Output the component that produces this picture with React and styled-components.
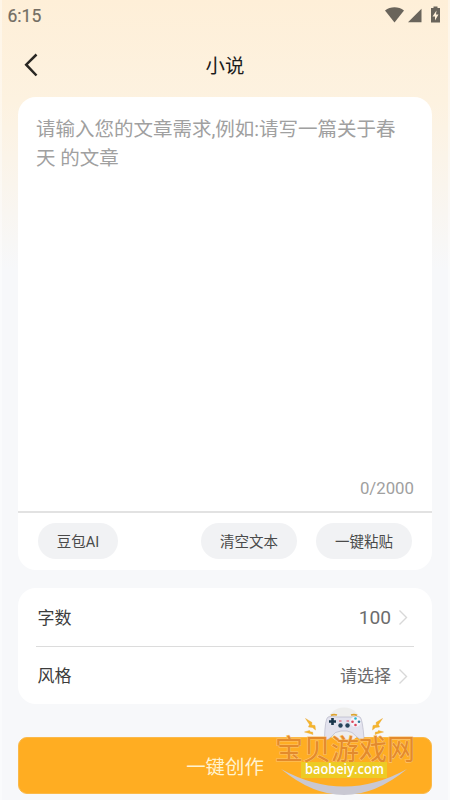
import React from 'react';
import styled, { createGlobalStyle } from 'styled-components';

const GlobalStyle = createGlobalStyle`
  * {
    box-sizing: border-box;
  }

  body {
    margin: 0;
    font-family: Roboto, "Noto Sans CJK SC", sans-serif;
  }

  button {
    border: none;
    padding: 0;
    font-family: inherit;
    cursor: pointer;
  }
`;

const Screen = styled.div`
  position: relative;
  width: 450px;
  height: 800px;
  overflow: hidden;
  display: flex;
  flex-direction: column;
  background: linear-gradient(180deg, #feefd8 0, #fdf2e0 100px, #f7f8fa 270px);
  border-left: 2px solid rgba(255, 255, 255, 0.4);
  border-right: 2px solid rgba(255, 255, 255, 0.4);
  background-origin: border-box;
`;

const StatusBar = styled.div`
  display: flex;
  justify-content: space-between;
  height: 32px;
  padding: 6px 6px 0 5.5px;
  color: #69645b;
`;

const Clock = styled.div`
  font-size: 17.5px;
  line-height: 20px;
  color: #736d63;
  -webkit-text-stroke: 0.2px currentColor;
`;

const StatusIcons = styled.svg`
  width: 58px;
  height: 20px;
`;

const Header = styled.header`
  display: grid;
  grid-template-columns: 48px 1fr 48px;
  align-items: center;
  height: 65px;
`;

const BackButton = styled.button`
  display: flex;
  width: 48px;
  height: 48px;
  padding: 12px 0 0 20px;
  background: none;
`;

const Title = styled.h1`
  margin: 0;
  padding-top: 5px;
  color: #1c1c1c;
  font-size: 19.4px;
  font-weight: 400;
  line-height: 28px;
  text-align: center;
`;

const Card = styled.section`
  margin: 0 16px 18px;
  background: #fff;
  border-radius: 18px;
`;

const Editor = styled.div`
  display: flex;
  flex-direction: column;
  justify-content: space-between;
  height: 416px;
  padding: 19px 18px 12px;
  border-bottom: 2px solid #e2e2e2;
`;

const Placeholder = styled.div`
  width: 368px;
  color: #a0a0a0;
  font-size: 19.5px;
  line-height: 28.5px;
`;

const Counter = styled.div`
  color: #a0a0a0;
  font-size: 16.8px;
  line-height: 22px;
  text-align: right;
`;

const Tools = styled.div`
  display: flex;
  gap: 19px;
  height: 57px;
  padding: 10px 20px 0;
`;

const ToolButton = styled.button`
  width: ${({ $width }) => $width}px;
  height: 36px;
  margin-right: ${({ $push }) => ($push ? 'auto' : '0')};
  padding-top: 3px;
  border-radius: 18px;
  background: #f1f2f4;
  color: #4a4a4a;
  font-size: 14.5px;
  line-height: 33px;
`;

const Option = styled.div`
  display: flex;
  align-items: center;
  height: ${({ $last }) => ($last ? 57 : 59)}px;
  margin: 0 18px;
  padding: 0 5px 0 1.5px;
  border-bottom: ${({ $last }) => ($last ? 'none' : '1px solid #dcdcdc')};
`;

const OptionLabel = styled.span`
  flex: 1;
  padding-bottom: 2px;
  color: #3c3c3c;
  font-size: 17px;
`;

const OptionValue = styled.span`
  margin-right: 8px;
  padding-bottom: ${({ $lift }) => $lift || 0}px;
  color: #6c6c6c;
  font-size: ${({ $size }) => $size}px;
`;

const CreateButton = styled.button`
  height: 57px;
  margin: 15px 16px 0;
  padding-top: 4px;
  border: 1px solid #fbb949;
  border-radius: 9px;
  background: #ffad22;
  color: #fff3cf;
  font-size: 19.4px;
  line-height: 51px;
`;

// Site mark floats over the button.
const SiteMark = styled.svg`
  position: absolute;
  left: 268px;
  top: 702px;
  width: 150px;
  height: 96px;
  pointer-events: none;
`;

const OptionArrow = () => (
  <svg width="10" height="16" viewBox="0 0 10 16" fill="none">
    <path d="M.5 1.500 7.500 8.500 .5 15.500" stroke="#d8d8d8" strokeWidth="1.400" />
  </svg>
);

const App = () => {
  return (
    <>
      <GlobalStyle />
      <Screen>
        <StatusBar>
          <Clock>6:15</Clock>
          <StatusIcons viewBox="0 0 58 20" fill="currentColor">
            <path d="M1 4.5C6.5.2 14.5.2 20 4.5L10.5 16.5Z" />
            <path d="M24 16.2 37.5 2.7V16.2Z" />
            <path d="M49.5 .5h4v1.5H56v14.5h-9v-14.5h2.5Z" />
            <path d="m52.5 4.5-4 6H51v4l3.5-6H52Z" fill="#feefd9" />
          </StatusIcons>
        </StatusBar>

        <Header>
          <BackButton aria-label="返回">
            <svg width="18" height="24" viewBox="0 0 18 24" fill="none">
              <path d="M14.5 1.5 4.2 11.7 14.5 22.5" stroke="#292723" strokeWidth="2.5" />
            </svg>
          </BackButton>
          <Title>小说</Title>
        </Header>

        <Card>
          <Editor>
            <Placeholder>
              请输入您的文章需求,例如:请写一篇关于春天 的文章
            </Placeholder>
            <Counter>0/2000</Counter>
          </Editor>
          <Tools>
            <ToolButton $width={80} $push>豆包AI</ToolButton>
            <ToolButton $width={96}>清空文本</ToolButton>
            <ToolButton $width={96}>一键粘贴</ToolButton>
          </Tools>
        </Card>

        <Card>
          <Option>
            <OptionLabel>字数</OptionLabel>
            <OptionValue $size={19.2}>100</OptionValue>
            <OptionArrow />
          </Option>
          <Option $last>
            <OptionLabel>风格</OptionLabel>
            <OptionValue $size={17} $lift={2}>请选择</OptionValue>
            <OptionArrow />
          </Option>
        </Card>

        <CreateButton>一键创作</CreateButton>

        <SiteMark viewBox="270 702 150 96">
          <circle cx="344" cy="725" r="17.5" fill="#eeeeed" />
          <path d="M281 769Q344 821 407 769Q344 804 281 769Z" fill="#c9c8d2" />
          <g fill="#f6b62c" stroke="#e6a12c" strokeWidth=".4">
            <path d="m305.500 718.500 6.500 4-.5 2.500 3.500.5.500 4.500-3-2.500-4-.5 1-2.500Z" />
            <path d="m304.500 732 5-1.500 1 1.500 2 0 .5 2.500-3-1Z" />
            <path d="m382.500 718.500-6.500 4 .5 2.500-3.500.5-.5 4.500 3-2.500 4-.5-1-2.500Z" />
            <path d="m383.500 732-5-1.500-1 1.500-2 0-.5 2.500 3-1Z" />
          </g>
          <path d="M331 715.5q2-1.500 6-.5M351 715q4-1 6 .5" stroke="#dda32e" strokeWidth="1.8" fill="none" />
          <path d="M328 717Q332 715.5 337 717H351Q357 715.5 360 717Q362.5 719 364 738Q362 742 357 737Q352 731 347 731H341Q335 731 331 737Q326 742 324.5 738Q325 719 328 717Z" fill="#e3e3ee" stroke="#b0b0c2" strokeWidth=".6" />
          <path d="M332.5 718v7M329 721.5h7" stroke="#18354a" strokeWidth="2.6" />
          <circle cx="355.5" cy="721.7" r="5.300" fill="#f4f4fa" />
          <path d="M339 721h2.5M346.5 721h2.5" stroke="#dc465b" strokeWidth="1.2" />
          <g fill="#27455b">
            <circle cx="340.5" cy="725.5" r="2.2" />
            <circle cx="347.5" cy="725.5" r="2.2" />
          </g>
          <circle cx="355.5" cy="718.5" r="1.3" fill="#29b5d0" />
          <circle cx="355.5" cy="725" r="1.3" fill="#dc465b" />
          <circle cx="352.5" cy="721.7" r="1.3" fill="#dc465b" />
          <circle cx="359" cy="721.7" r="1.3" fill="#2b7899" />
          <text x="275" y="759.5" fontFamily="Noto Sans CJK SC, sans-serif" fontSize="28" fill="#e38a2c" stroke="#fcc370" strokeWidth="1.2" paintOrder="stroke">宝贝游戏网</text>
          <rect x="301" y="762" width="86" height="16" fill="#edcb25" />
          <text x="305" y="774" textLength="79" lengthAdjust="spacingAndGlyphs" fontFamily="Open Sans, sans-serif" fontSize="14" fontWeight="600" fill="#fff">baobeiy.com</text>
        </SiteMark>
      </Screen>
    </>
  );
};

export default App;
